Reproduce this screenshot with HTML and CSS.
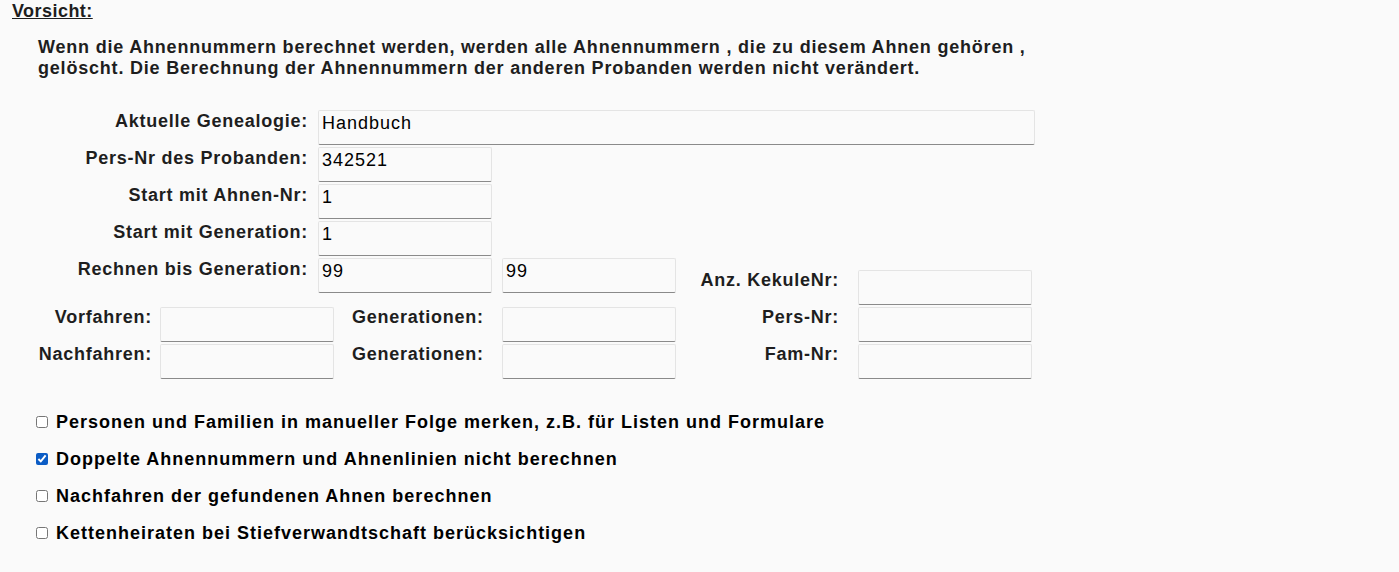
FILE: index.html
```html
<!DOCTYPE html>
<html lang="de">
<head>
    <meta charset="UTF-8">
    <title>Ahnennummern berechnen</title>
    <link rel="stylesheet" href="styles.css">
</head>
<body>
  <div class="page">
    <div class="warn-title">Vorsicht:</div>
    <p class="warn-text">Wenn die Ahnennummern berechnet werden, werden alle Ahnennummern , die zu diesem Ahnen gehören ,<br>gelöscht. Die Berechnung der Ahnennummern der anderen Probanden werden nicht verändert.</p>

    <div class="form-top">
      <div class="row">
        <label class="lbl">Aktuelle Genealogie:</label>
        <input class="field wide" type="text" value="Handbuch">
      </div>
      <div class="row">
        <label class="lbl">Pers-Nr des Probanden:</label>
        <input class="field" type="text" value="342521">
      </div>
      <div class="row">
        <label class="lbl">Start mit Ahnen-Nr:</label>
        <input class="field" type="text" value="1">
      </div>
      <div class="row">
        <label class="lbl">Start mit Generation:</label>
        <input class="field" type="text" value="1">
      </div>
      <div class="row">
        <label class="lbl">Rechnen bis Generation:</label>
        <input class="field" type="text" value="99">
        <input class="field second" type="text" value="99">
        <label class="lbl lbl-kek">Anz. KekuleNr:</label>
        <input class="field field-kek" type="text">
      </div>
    </div>

    <div class="form-grid">
      <label class="lbl g1">Vorfahren:</label>
      <input class="field" type="text">
      <label class="lbl g3">Generationen:</label>
      <input class="field" type="text">
      <label class="lbl g5">Pers-Nr:</label>
      <input class="field" type="text">

      <label class="lbl g1">Nachfahren:</label>
      <input class="field" type="text">
      <label class="lbl g3">Generationen:</label>
      <input class="field" type="text">
      <label class="lbl g5">Fam-Nr:</label>
      <input class="field" type="text">
    </div>

    <div class="checks">
      <label class="check"><input type="checkbox"> Personen und Familien in manueller Folge merken, z.B. für Listen und Formulare</label>
      <label class="check"><input type="checkbox" checked> Doppelte Ahnennummern und Ahnenlinien nicht berechnen</label>
      <label class="check"><input type="checkbox"> Nachfahren der gefundenen Ahnen berechnen</label>
      <label class="check"><input type="checkbox"> Kettenheiraten bei Stiefverwandtschaft berücksichtigen</label>
    </div>
  </div>
</body>
</html>
```

FILE: styles.css
```css
body { margin: 0; background-color: #fafafa; font-family: "Liberation Sans", Arial, sans-serif; color: #1e1e1e; }
.page { padding: 1px 0 0 0; }
.warn-title { margin-left: 12px; font-size: 18px; font-weight: bold; text-decoration: underline; letter-spacing: 0.45px; line-height: 21px; }
.warn-text { margin: 15px 0 0 38px; font-size: 18px; font-weight: bold; letter-spacing: 0.8px; line-height: 21px; }

.form-top { margin-top: 31px; display: flex; flex-direction: column; gap: 2px; }
.row { display: flex; align-items: flex-start; }
.lbl { font-size: 18px; font-weight: bold; letter-spacing: 0.75px; line-height: 21px; text-align: right; padding-top: 1px; }
.form-top .lbl { width: 308px; margin-right: 10px; }
.form-top .lbl-kek { width: 163px; margin: 11px 19px 0 0; }

.field { width: 174px; height: 35px; box-sizing: border-box; border: 1px solid #e4e4e4; border-bottom: 1px solid #8a8a8a; border-radius: 2px; background-color: #fafafa; font-family: "Liberation Sans", Arial, sans-serif; font-size: 18px; letter-spacing: 1px; color: #000; padding: 0 3px 8px 3px; margin: 0; }
.field.wide { width: 717px; }
.field.second { margin-left: 10px; }
.field.field-kek { margin-top: 12px; }

.form-grid { margin-top: 2px; display: grid; grid-template-columns: 160px 174px 168px 174px 182px 174px; row-gap: 2px; }
.form-grid .lbl { padding-top: 0; }
.form-grid .g1 { padding-right: 8px; }
.form-grid .g3 { text-align: left; padding-left: 18px; }
.form-grid .g5 { padding-right: 19px; }

.checks { margin-top: 32px; margin-left: 36px; display: flex; flex-direction: column; gap: 15px; }
.check { display: flex; align-items: center; font-size: 18px; font-weight: bold; letter-spacing: 1px; line-height: 22px; color: #000; }
.check input { width: 12px; height: 12px; margin: 0 8px 0 0; accent-color: #0b5cc5; }
```
